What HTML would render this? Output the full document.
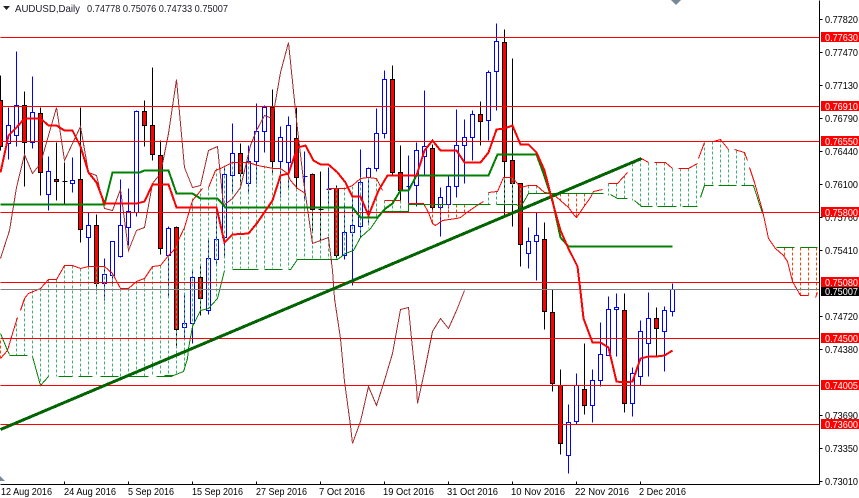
<!DOCTYPE html>
<html><head><meta charset="utf-8"><title>AUDUSD,Daily</title>
<style>
html,body{margin:0;padding:0;background:#fff;width:859px;height:498px;overflow:hidden}
svg{display:block}
text{font-family:"Liberation Sans",sans-serif;font-size:10.5px;fill:#000}
.w text{fill:#fff}
</style></head><body>
<svg width="859" height="498" viewBox="0 0 859 498" xmlns="http://www.w3.org/2000/svg">
<rect width="859" height="498" fill="#fff"/>
<g transform="translate(.5,.5)" shape-rendering="crispEdges" fill="none">
<!-- black wicks -->
<path stroke="#000" d="M0 75V150M24 91V186M40 107V195M56 142V200M64 162V205M80 107V242M96 214V290M144 100V146M152 67V160M160 140V254M176 226V345M200 265V315M240 143V185M272 89V173M296 107V190M312 173V232M320 171V240M336 185V258M392 65V176M400 145V202M432 144V212M480 101V145M504 29V215M512 58V226M520 183V266M544 222V329M552 289V391M560 369V454M584 343V414M624 293V412M656 307V355"/>
<!-- blue wicks -->
<path stroke="#00f" d="M8 107V159M16 51V146M32 76V148M48 156V210M72 157V192M88 212V266M104 258V300M112 241V286M120 179V257M128 188V245M136 110V216M168 226V298M184 295V338M192 269V343M208 240V314M216 208V263M224 168V258M232 123V193M248 145V192M256 103V183M264 105V152M280 126V197M288 116V190M304 151V200M328 167V210M344 205V259M352 197V285M360 149V237M368 167V225M376 108V171M384 70V138M408 155V203M416 142V206M424 90V176M440 187V236M448 176V208M456 109V197M464 119V183M472 110V160M488 70V140M496 23V110M528 227V268M536 212V280M568 404V473M576 373V424M592 369V422M600 322V386M608 296V355M616 293V356M632 367V416M640 320V385M648 292V376M664 306V371M672 283V316"/>
<!-- red bodies -->
<path stroke="#000" fill="#f00" d="M-2 100h4V146h-4zM22 105h4V142h-4zM38 113h4V172h-4zM54 179h4V181h-4zM78 179h4V229h-4zM94 225h4V283h-4zM142 111h4V125h-4zM150 125h4V154h-4zM158 155h4V248h-4zM174 227h4V329h-4zM198 277h4V298h-4zM238 153h4V173h-4zM270 107h4V161h-4zM294 138h4V177h-4zM310 174h4V209h-4zM334 188h4V255h-4zM390 79h4V172h-4zM398 172h4V190h-4zM430 148h4V207h-4zM478 114h4V121h-4zM502 42h4V161h-4zM510 160h4V183h-4zM518 183h4V244h-4zM542 239h4V311h-4zM550 312h4V383h-4zM558 385h4V443h-4zM582 389h4V405h-4zM622 310h4V403h-4zM654 318h4V328h-4z"/>
<path stroke="#000" d="M62 181h5M318 209h5"/>
<!-- blue bodies -->
<path stroke="#00f" fill="#fff" d="M6 125h4V143h-4zM14 105h4V135h-4zM30 112h4V142h-4zM46 171h4V194h-4zM70 180h4V183h-4zM86 225h4V237h-4zM102 274h4V283h-4zM110 241h4V275h-4zM118 225h4V256h-4zM126 211h4V227h-4zM134 111h4V212h-4zM166 228h4V255h-4zM182 323h4V327h-4zM190 277h4V323h-4zM206 258h4V310h-4zM214 239h4V259h-4zM222 174h4V237h-4zM230 153h4V175h-4zM246 161h4V183h-4zM254 131h4V161h-4zM262 107h4V131h-4zM278 137h4V161h-4zM286 125h4V162h-4zM342 232h4V255h-4zM350 225h4V232h-4zM358 182h4V226h-4zM366 168h4V177h-4zM374 133h4V168h-4zM382 79h4V133h-4zM414 150h4V185h-4zM422 146h4V156h-4zM438 197h4V207h-4zM446 186h4V204h-4zM454 145h4V186h-4zM462 137h4V145h-4zM470 114h4V137h-4zM486 72h4V120h-4zM494 41h4V71h-4zM526 241h4V253h-4zM534 235h4V241h-4zM566 422h4V455h-4zM574 385h4V421h-4zM590 380h4V405h-4zM598 354h4V380h-4zM606 309h4V355h-4zM614 307h4V309h-4zM630 373h4V403h-4zM638 331h4V376h-4zM646 318h4V343h-4zM662 310h4V331h-4zM670 289h4V311h-4z"/>
<path stroke="#00f" d="M302 176h5M326 189h5M406 186h5"/>
<!-- cloud hatching -->
<path stroke="#3cb371" stroke-dasharray="3 2" d="M16 318V355M24 298V355M32 290V356M40 288V385M48 279V376M56 279V376M64 265V376M72 265V376M80 268V376M88 266V376M96 266V376M104 266V376M112 273V376M120 288V376M128 288V376M136 281V376M144 278V376M152 266V376M160 265V375M168 255V375M176 245V375M184 227V371M192 198V326M200 188V310M208 187V308M216 168V298M224 165V270M232 161V268M240 161V268M248 161V268M256 164V268M264 165V268M272 167V268M280 168V268M288 172V268M296 188V259M304 193V259M312 210V259M320 210V259M328 188V259M336 187V259M344 187V253M352 186V248M360 177V237M368 177V228M376 178V218M384 200V211M392 200V211M400 200V211M488 192V204M496 191V204M504 177V204M512 177V204M520 187V204M528 185V193M536 185V193M544 192V193M608 183V195M616 183V198M624 175V198M632 163V200M640 158V206M648 162V206M656 162V206M664 162V206M672 168V206M680 168V206M688 168V206M696 165V206M704 142V185M712 141V185M720 139V185M728 149V185M736 150V185M744 152V185"/>
<path stroke="#ff4500" stroke-dasharray="3 2" d="M0 340V358M432 204V223M440 204V220M448 204V219M456 204V218M464 204V213M552 193V194M560 193V200M568 193V207M576 193V217M584 193V205M784 247V255M792 247V280M800 247V295M808 247V295M816 247V297"/>
<!-- senkou A thin red -->
<path stroke="#f00" d="M0 358L7 350L12 333L17 317M20 310L24 298L28 293L40 288L48 279L56 279L64 265L72 265L80 268L88 266L104 266L112 273L120 288L128 288L136 281L144 278L152 266L160 265L168 255L173 250L184 227L192 200L202 188M208 187L215 170L222 167L232 162H248L257 165L273 168H280L287 173L290 180L297 188L305 193M327 188H345L352 185L360 178L368 177L376 178L382 190M384 200H400M408 203H423L428 212L432 223L435 225L442 220L456 218L460 217L465 213L475 206L483 201M488 192L497 191L503 177L512 177L520 187L528 185L536 185L544 192L552 193L560 200L568 207L574 215L576 217L585 204L590 197L593 191L602 189M608 183H617L627 172M633 163L641 158L648 162M654 162H665L672 168M678 168H688L697 163M698 158L704 142M713 141L720 139L728 149M734 149L744 152L747 160M749 167L754 182L762 210L768 238L775 248L783 255L787 261L792 281L800 295H808M815 297L817 292"/>
<!-- senkou B thin green -->
<path stroke="#008000" d="M0 333L7 350L9 354M9 355H27M32 356L40 385L48 376M58 376H72M78 376H92M100 376H118M124 376H148M156 376H172M164 375H173L183 371L187 358L188 348L192 326L200 310L208 308L217 298L224 270M232 269H258M264 269H282M288 269H290L297 259H337L345 253L353 250L360 237L370 228L377 218L382 211H408L408 204H446M452 204H490M496 204H516L520 207L528 193H603M610 194L617 198H627M634 200L641 206H652M657 206H676M682 206H697M700 197L704 185H713M718 185H736M741 185H753L762 213M776 247H794M800 247H817"/>
<!-- brown chikou -->
<path stroke="#a52a2a" d="M0 258L9 230L16 187L24 154L32 173L40 163L48 135L56 107L64 160L80 126L88 172L96 175L104 208L112 210L120 189L128 250L136 230L144 227L152 183L160 173L168 133L176 79L184 167L192 187L200 185L208 150L217 146L223 205L232 198L240 187L250 145L256 130L264 115L272 118L280 72L288 42L296 120L303 180L312 243L320 240L328 237L332 270L334 298L340 338L344 381L350 425L352 443L360 421L368 386L376 405L384 380L392 353L400 309L408 307L411 338L416 386L417 403L424 371L432 331L440 318L448 328L456 310L464 290"/>
<!-- horizontals -->
<path stroke="#808080" d="M0 289H819"/>
<path stroke="#f00" d="M0 37H819M0 106H819M0 141H819M0 212H819M0 282H819M0 338H819M0 385H819M0 424H819"/>
<!-- trendline -->
<path stroke="#006400" stroke-width="3" d="M0 429L641 158"/>
<!-- kijun green -->
<path stroke="#008000" stroke-width="2" d="M0 204H104L112 172H139L144 170H168L176 193H192L200 198H217L225 207H352L360 217H377L385 208L392 203L400 190H408L416 175H488L497 154H536L543 173L552 200L560 237L568 246H672"/>
<!-- tenkan red -->
<path stroke="#f00" stroke-width="2" d="M0 172L8 135L16 127L24 118H40L48 125H56L64 130H72L80 146L88 172L96 182L104 203H136L144 201L152 184H168L176 207H216L224 242L232 234L248 233L257 222L272 200L280 175L288 173L297 147L305 145L313 160L320 164H328L337 172L345 182L352 196H360L368 215L378 190L387 175H416L424 150L432 140L440 150H456L464 162H480L488 152L496 129L504 128L512 125L520 144H528L536 152L544 170L553 205L560 230L567 246L577 266L580 291L583 318L592 342H600L608 347L616 381L624 382L632 381L640 358L648 356H656L664 355L672 350"/>
<!-- axes -->
<path stroke="#000" d="M819 0V484M0 484H819"/>
<path stroke="#000" d="M64 481V484M128 481V484M192 481V484M256 481V484M320 481V484M384 481V484M448 481V484M512 481V484M576 481V484M640 481V484M819 19H822M819 52H822M819 85H822M819 118H822M819 151H822M819 184H822M819 217H822M819 250H822M819 316H822M819 349H822M819 415H822M819 448H822M819 481H822"/>
</g>
<!-- triangles -->
<polygon points="3,6 10,6 6.5,10" fill="#222"/>
<polygon points="671,0 681,0 676,5" fill="#778899"/>
<polygon points="0,476 5,481 0,481" fill="#778899"/>
<!-- header -->
<text x="15" y="12" textLength="65" lengthAdjust="spacingAndGlyphs" style="fill:#1a1a2a">AUDUSD,Daily</text>
<text x="87" y="12" textLength="141" lengthAdjust="spacingAndGlyphs" style="fill:#1a1a2a">0.74778 0.75076 0.74733 0.75007</text>
<!-- right axis -->
<g>
<text x="825" y="23" textLength="33" lengthAdjust="spacingAndGlyphs">0.77820</text>
<text x="825" y="56" textLength="33" lengthAdjust="spacingAndGlyphs">0.77470</text>
<text x="825" y="89" textLength="33" lengthAdjust="spacingAndGlyphs">0.77130</text>
<text x="825" y="122" textLength="33" lengthAdjust="spacingAndGlyphs">0.76790</text>
<text x="825" y="155" textLength="33" lengthAdjust="spacingAndGlyphs">0.76440</text>
<text x="825" y="188" textLength="33" lengthAdjust="spacingAndGlyphs">0.76100</text>
<text x="825" y="221" textLength="33" lengthAdjust="spacingAndGlyphs">0.75760</text>
<text x="825" y="254" textLength="33" lengthAdjust="spacingAndGlyphs">0.75410</text>
<text x="825" y="320" textLength="33" lengthAdjust="spacingAndGlyphs">0.74720</text>
<text x="825" y="353" textLength="33" lengthAdjust="spacingAndGlyphs">0.74380</text>
<text x="825" y="419" textLength="33" lengthAdjust="spacingAndGlyphs">0.73690</text>
<text x="825" y="452" textLength="33" lengthAdjust="spacingAndGlyphs">0.73350</text>
<text x="825" y="485" textLength="33" lengthAdjust="spacingAndGlyphs">0.73010</text>
</g>
<!-- price labels -->
<rect x="821" y="286" width="38" height="10" fill="#000"/>
<text x="825" y="295" textLength="33" lengthAdjust="spacingAndGlyphs" style="fill:#fff">0.75007</text>
<g fill="#f00">
<rect x="821" y="32" width="38" height="10"/>
<rect x="821" y="101" width="38" height="10"/>
<rect x="821" y="136" width="38" height="10"/>
<rect x="821" y="207" width="38" height="10"/>
<rect x="821" y="277" width="38" height="10"/>
<rect x="821" y="333" width="38" height="10"/>
<rect x="821" y="380" width="38" height="10"/>
<rect x="821" y="419" width="38" height="10"/>
</g>
<g class="w">
<text x="825" y="41" textLength="33" lengthAdjust="spacingAndGlyphs">0.77630</text>
<text x="825" y="110" textLength="33" lengthAdjust="spacingAndGlyphs">0.76910</text>
<text x="825" y="145" textLength="33" lengthAdjust="spacingAndGlyphs">0.76550</text>
<text x="825" y="216" textLength="33" lengthAdjust="spacingAndGlyphs">0.75800</text>
<text x="825" y="286" textLength="33" lengthAdjust="spacingAndGlyphs">0.75080</text>
<text x="825" y="342" textLength="33" lengthAdjust="spacingAndGlyphs">0.74500</text>
<text x="825" y="389" textLength="33" lengthAdjust="spacingAndGlyphs">0.74005</text>
<text x="825" y="428" textLength="33" lengthAdjust="spacingAndGlyphs">0.73600</text>
</g>
<!-- date axis -->
<g>
<text x="1" y="495" textLength="51" lengthAdjust="spacingAndGlyphs">12 Aug 2016</text>
<text x="64" y="495" textLength="52" lengthAdjust="spacingAndGlyphs">24 Aug 2016</text>
<text x="128" y="495" textLength="46" lengthAdjust="spacingAndGlyphs">5 Sep 2016</text>
<text x="192" y="495" textLength="51" lengthAdjust="spacingAndGlyphs">15 Sep 2016</text>
<text x="256" y="495" textLength="51" lengthAdjust="spacingAndGlyphs">27 Sep 2016</text>
<text x="319" y="495" textLength="46" lengthAdjust="spacingAndGlyphs">7 Oct 2016</text>
<text x="383" y="495" textLength="51" lengthAdjust="spacingAndGlyphs">19 Oct 2016</text>
<text x="447" y="495" textLength="51" lengthAdjust="spacingAndGlyphs">31 Oct 2016</text>
<text x="511" y="495" textLength="54" lengthAdjust="spacingAndGlyphs">10 Nov 2016</text>
<text x="575" y="495" textLength="54" lengthAdjust="spacingAndGlyphs">22 Nov 2016</text>
<text x="639" y="495" textLength="47" lengthAdjust="spacingAndGlyphs">2 Dec 2016</text>
</g>
</svg>
</body></html>
